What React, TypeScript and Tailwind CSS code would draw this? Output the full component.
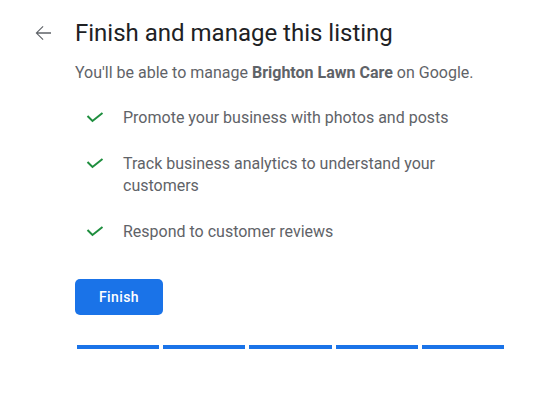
const items = [
  "Promote your business with photos and posts",
  "Track business analytics to understand your customers",
  "Respond to customer reviews",
];

function Check() {
  return (
    <svg width="18" height="12" viewBox="0 0 18 12" className="shrink-0 mt-[5px]">
      <polyline
        points="1.5,4 6.5,9 16.5,1"
        fill="none"
        stroke="#1e8e3e"
        strokeWidth="2"
      />
    </svg>
  );
}

function BackArrow() {
  return (
    <svg width="24" height="24" viewBox="0 0 24 24" fill="#5f6368">
      <path d="M20 11.3H6.9l5.6-5.6-.8-.8L4.6 12l7.1 7.1.8-.8-5.6-5.6H20z" />
    </svg>
  );
}

export default function App() {
  return (
    <div className="w-[556px] h-[402px] bg-white font-['Roboto',sans-serif]">
      <div className="flex pt-[17px] pl-[31px]">
        <div className="mt-[4px]">
          <BackArrow />
        </div>

        <div className="ml-[20px] flex flex-col">
          <h1 className="text-[24px] leading-[32px] text-[#202124] font-normal">
            Finish and manage this listing
          </h1>

          <p className="mt-[12px] text-[16px] leading-[24px] text-[#5f6368]">
            You'll be able to manage <span className="font-bold">Brighton Lawn Care</span> on Google.
          </p>

          <ul className="mt-[22px] flex flex-col gap-[24px]">
            {items.map((item) => (
              <li key={item} className="flex gap-[19px] pl-[11px]">
                <Check />
                <span className="w-[330px] text-[16px] leading-[22px] text-[#5f6368]">
                  {item}
                </span>
              </li>
            ))}
          </ul>

          <button
            type="button"
            className="mt-[36px] w-[88px] h-[36px] rounded-[5px] bg-[#1a73e8] text-white text-[14px] font-medium tracking-[0.4px]"
          >
            Finish
          </button>

          <div className="mt-[30px] ml-[2px] flex gap-[4px] w-[427px]">
            <div className="flex-1 h-[4px] bg-[#1a73e8]" />
            <div className="flex-1 h-[4px] bg-[#1a73e8]" />
            <div className="flex-1 h-[4px] bg-[#1a73e8]" />
            <div className="flex-1 h-[4px] bg-[#1a73e8]" />
            <div className="flex-1 h-[4px] bg-[#1a73e8]" />
          </div>
        </div>
      </div>
    </div>
  );
}
